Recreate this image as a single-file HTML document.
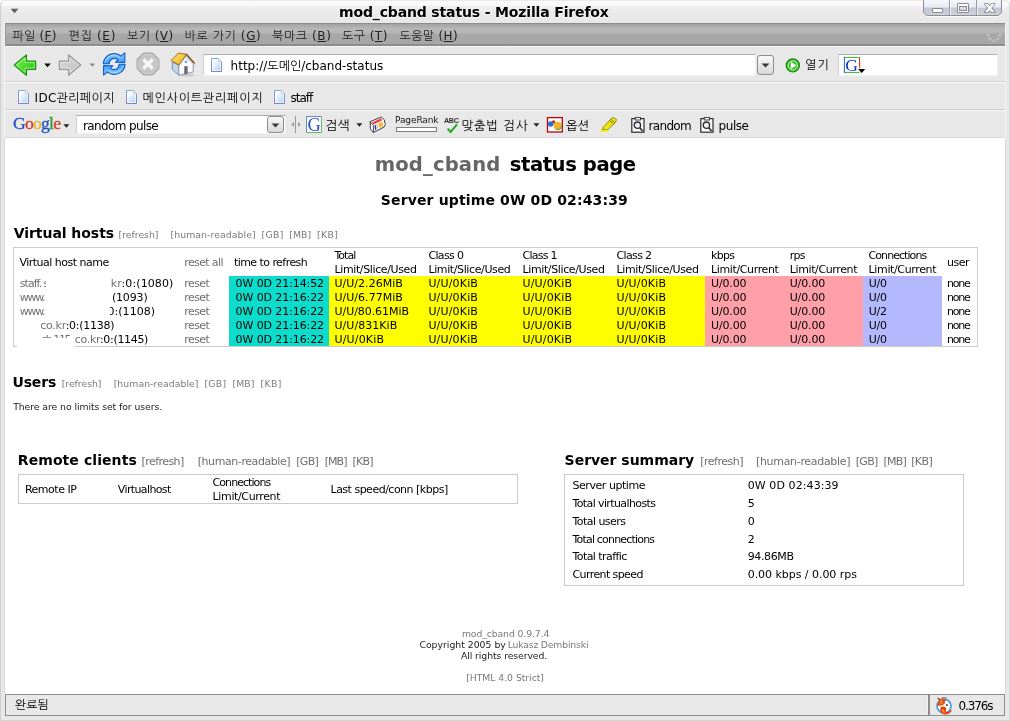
<!DOCTYPE html>
<html lang="ko">
<head>
<meta charset="utf-8">
<title>mod_cband status - Mozilla Firefox</title>
<style>
html,body{margin:0;padding:0;}
body{width:1010px;height:721px;overflow:hidden;background:#fbfbfb;font-family:"DejaVu Sans","Liberation Sans","NanumGothic",sans-serif;}
#win{will-change:transform;position:relative;width:1010px;height:721px;overflow:hidden;background:#e8e8e8;border-radius:6px 6px 0 0;box-shadow:inset 1px 0 0 #cfcfcf,inset -1px 0 0 #d8d8d8,inset 0 -1px 0 #d2d2d2;}
.abs{position:absolute;}
.t{position:absolute;white-space:nowrap;line-height:1;}
.ui{font-size:12px;color:#111;}
/* title bar */
#titlebar{left:1px;top:0;width:1008px;height:23px;border-radius:6px 6px 0 0;background:linear-gradient(#d8d8d8 0,#fbfbfb 1px,#f9f9f9 5px,#f0eef0 7px,#edebed 11px,#e9e9e9 14px,#e8e8e8 23px);}
#title{left:339px;top:4.7px;font-size:14px;font-weight:bold;color:#000;letter-spacing:-0.15px;text-shadow:0 1px 0 rgba(255,255,255,0.85);}
/* menu bar */
#menubar{left:5px;top:23px;width:1000px;height:23px;background:linear-gradient(#8c8c8c 0,#8c8c8c 1px,#a2a2a2 1px,#b4b4b4 5px,#b8b8b8 7px,#b5b5b5 10px,#a7a7a7 11px,#a6a6a6 21px,#8e8e8e 21px,#8a8a8a 23px);box-shadow:inset 1px 0 0 #949494;}
#menubar .t{top:7px;font-size:12px;color:#222;}
#menubar u{text-decoration:underline;}
/* nav toolbar */
#navbar{left:5px;top:46px;width:1000px;height:35px;background:#e8e8e8;border-top:1px solid #f6f6f6;box-sizing:border-box;}
#bmbar{left:5px;top:81px;width:1000px;height:28px;background:#e8e8e8;border-top:1px solid #cdcdcd;box-shadow:inset 0 1px 0 #fbfbfb;box-sizing:border-box;}
#gbar{left:5px;top:109px;width:1000px;height:29px;background:#e8e8e8;border-top:1px solid #cacaca;border-bottom:1px solid #dcdcdc;box-shadow:inset 0 1px 0 #fbfbfb;box-sizing:border-box;}
.field{position:absolute;background:#fff;border:1px solid #cdcdd4;border-top-color:#adadb4;border-right-color:#f0f0f2;border-bottom-color:#f2f2f4;box-sizing:border-box;border-radius:1px;}
/* content */
#content{left:5px;top:138px;width:1000px;height:556px;background:#fff;}

.t{color:#000;}
.box{position:absolute;box-sizing:border-box;border:1px solid #cbcbcb;}
.cell{position:absolute;}
.wh{position:absolute;background:#fff;}
/* status bar */
#statusbar{left:5px;top:694px;width:1000px;height:22px;background:#e8e8e8;border:1px solid #8e8e8e;box-sizing:border-box;}
</style>
</head>
<body>
<div id="win">
  <div id="titlebar" class="abs"></div>
  <div id="title" class="t">mod_cband status - Mozilla Firefox</div>

  <div id="menubar" class="abs">
    <span class="t" style="left:7.5px;letter-spacing:0.25px">파일 (<u>F</u>)</span>
    <span class="t" style="left:63.5px;letter-spacing:0.7px">편집 (<u>E</u>)</span>
    <span class="t" style="left:122px;letter-spacing:0.45px">보기 (<u>V</u>)</span>
    <span class="t" style="left:179.5px;letter-spacing:0.6px">바로 가기 (<u>G</u>)</span>
    <span class="t" style="left:267px;letter-spacing:0.6px">북마크 (<u>B</u>)</span>
    <span class="t" style="left:337px;letter-spacing:0.45px">도구 (<u>T</u>)</span>
    <span class="t" style="left:394.5px;letter-spacing:0.35px">도움말 (<u>H</u>)</span>
  </div>


  <!-- title decorations -->
  <svg class="abs" style="left:10px;top:8px" width="9" height="6" viewBox="0 0 9 6"><polygon points="0.6,0.8 8.4,0.8 4.5,5.2" fill="#5e5e5e"/></svg>
  <div class="abs" id="wbtns" style="left:923px;top:-1px;width:79px;height:17px;box-sizing:border-box;border:1px solid #8f8f8f;border-radius:0 0 5px 5px;background:linear-gradient(#f4f6fb 0,#e6eaf3 7.3px,#c1c5d4 7.8px,#d3d6e1 17px);box-shadow:0 1px 0 #fafafa;"></div>
  <div class="abs" style="left:949px;top:0;width:1px;height:15px;background:#9a9a9a;"></div>
  <div class="abs" style="left:950px;top:0;width:1px;height:15px;background:#f6f6f8;"></div>
  <div class="abs" style="left:976px;top:0;width:1px;height:15px;background:#9a9a9a;"></div>
  <div class="abs" style="left:977px;top:0;width:1px;height:15px;background:#f6f6f8;"></div>
  <div class="abs" style="left:932px;top:8px;width:11px;height:5px;box-sizing:border-box;border:1px solid #8a8a8a;border-radius:1px;background:#fdfdfd;"></div>
  <div class="abs" style="left:957px;top:3px;width:12px;height:10px;box-sizing:border-box;border:1px solid #8a8a8a;border-radius:1px;background:#fdfdfd;"></div>
  <div class="abs" style="left:959px;top:6px;width:8px;height:5px;box-sizing:border-box;border:1px solid #8a8a8a;background:#d4d8e2;"></div>
  <svg class="abs" style="left:983px;top:2px" width="14" height="12" viewBox="983 2 14 12">
    <g fill="#fdfdfd" stroke="#808080" stroke-width="1.5" stroke-linejoin="round">
      <polygon points="984.8,3.9 988,3.9 994.8,12.3 991.6,12.3"/>
      <polygon points="991.6,3.9 994.8,3.9 988,12.3 984.8,12.3"/>
    </g>
    <g fill="#fdfdfd">
      <polygon points="984.8,3.9 988,3.9 994.8,12.3 991.6,12.3"/>
      <polygon points="991.6,3.9 994.8,3.9 988,12.3 984.8,12.3"/>
    </g>
  </svg>
  <!-- throbber -->
  <svg class="abs" style="left:985px;top:26px" width="18" height="18" viewBox="0 0 18 18">
    <g fill="#bdbdbd">
      <rect x="7.7" y="1.2" width="2.6" height="2.6" opacity="0.35"/>
      <rect x="3.2" y="3" width="2.6" height="2.6" opacity="0.4" transform="rotate(45 4.5 4.3)"/>
      <rect x="12.2" y="3" width="2.6" height="2.6" opacity="0.4" transform="rotate(45 13.5 4.3)"/>
      <rect x="1.6" y="7.7" width="2.8" height="2.8" transform="rotate(45 3 9.1)"/>
      <rect x="13.6" y="7.7" width="2.8" height="2.8" transform="rotate(45 15 9.1)"/>
      <rect x="3.6" y="11.6" width="2.8" height="2.8" transform="rotate(45 5 13)"/>
      <rect x="11.6" y="11.6" width="2.8" height="2.8" transform="rotate(45 13 13)"/>
      <rect x="7.6" y="13.6" width="2.8" height="2.8" transform="rotate(45 9 15)"/>
    </g>
  </svg>

  <div class="abs" style="left:4px;top:23px;width:1px;height:115px;background:#f3f3f3;"></div>
  <div class="abs" style="left:1005px;top:23px;width:1px;height:115px;background:#f3f3f3;"></div>
  <div class="abs" style="left:4px;top:138px;width:1px;height:556px;background:#d8d8d8;"></div>
  <div class="abs" style="left:1005px;top:138px;width:1px;height:556px;background:#d8d8d8;"></div>
  <div id="navbar" class="abs"></div>

  <!-- NAV TOOLBAR ICONS -->
  <svg class="abs" style="left:12px;top:52px" width="26" height="26" viewBox="12 52 26 26">
    <defs>
      <linearGradient id="gback" x1="0" y1="0" x2="1" y2="1">
        <stop offset="0" stop-color="#a8f488"/><stop offset="0.5" stop-color="#4cdb2c"/><stop offset="1" stop-color="#22b814"/>
      </linearGradient>
      <linearGradient id="gfwd" x1="0" y1="0" x2="1" y2="1">
        <stop offset="0" stop-color="#dcdcdc"/><stop offset="1" stop-color="#bdbdbd"/>
      </linearGradient>
    </defs>
    <polygon points="14.3,65 26.4,54.9 26.4,61.2 35.6,61.2 35.6,69.4 26.4,69.4 26.4,75.3" fill="url(#gback)" stroke="#13990b" stroke-width="1.3" stroke-linejoin="round"/>
    <polygon points="16.3,65 25.1,57.7 25.1,62.5 34.3,62.5 34.3,68.1 25.1,68.1 25.1,72.5" fill="none" stroke="#b9f59f" stroke-width="0.9" stroke-linejoin="round" opacity="0.85"/>
  </svg>
  <svg class="abs" style="left:44px;top:63px" width="7" height="5" viewBox="0 0 7 5"><polygon points="0.3,0.5 6.7,0.5 3.5,4.2" fill="#000"/></svg>
  <svg class="abs" style="left:57px;top:52px" width="26" height="26" viewBox="57 52 26 26">
    <polygon points="80.7,65 68.6,54.9 68.6,61.2 59.4,61.2 59.4,69.4 68.6,69.4 68.6,75.3" fill="url(#gfwd)" stroke="#989898" stroke-width="1.3" stroke-linejoin="round"/>
    <polygon points="78.7,65 69.9,57.7 69.9,62.5 60.7,62.5 60.7,68.1 69.9,68.1 69.9,72.5" fill="none" stroke="#e9e9e9" stroke-width="0.9" stroke-linejoin="round" opacity="0.9"/>
  </svg>
  <svg class="abs" style="left:89px;top:63px" width="7" height="5" viewBox="0 0 7 5"><polygon points="0.6,0.6 6.2,0.6 3.4,3.8" fill="#8a8a8a"/></svg>

  <!-- reload -->
  <svg class="abs" style="left:102px;top:52px" width="24" height="24" viewBox="0 0 24 24">
    <defs>
      <linearGradient id="grel" x1="0" y1="0" x2="0" y2="1">
        <stop offset="0" stop-color="#94d2ff"/><stop offset="1" stop-color="#3898f4"/>
      </linearGradient>
    </defs>
    <g>
      <path d="M1.4 11.8 C1.6 5.6 6.6 1.4 12.4 1.6 C15 1.7 17.2 2.6 19 4.2 L22.8 0.8 L22.8 10.4 L13.6 10.2 L16.2 7.6 C15 6.8 13.8 6.4 12.4 6.4 C9.8 6.4 7.6 8.2 7.2 11.8 Z" fill="url(#grel)" stroke="#0c5ad0" stroke-width="1.1" stroke-linejoin="round"/>
      <path d="M3 10.6 C3.6 6.2 7.6 3 12.4 3.1 C14.6 3.2 16.6 4 18.2 5.4" fill="none" stroke="#c4e6ff" stroke-width="1" opacity="0.8"/>
    </g>
    <g transform="rotate(180 12.2 12)">
      <path d="M1.4 11.8 C1.6 5.6 6.6 1.4 12.4 1.6 C15 1.7 17.2 2.6 19 4.2 L22.8 0.8 L22.8 10.4 L13.6 10.2 L16.2 7.6 C15 6.8 13.8 6.4 12.4 6.4 C9.8 6.4 7.6 8.2 7.2 11.8 Z" fill="url(#grel)" stroke="#0c5ad0" stroke-width="1.1" stroke-linejoin="round"/>
      <path d="M3 10.6 C3.6 6.2 7.6 3 12.4 3.1 C14.6 3.2 16.6 4 18.2 5.4" fill="none" stroke="#c4e6ff" stroke-width="1" opacity="0.8"/>
    </g>
  </svg>

  <!-- stop -->
  <svg class="abs" style="left:136px;top:52px" width="24" height="24" viewBox="0 0 24 24">
    <polygon points="7.6,1.2 16.4,1.2 22.8,7.6 22.8,16.4 16.4,22.8 7.6,22.8 1.2,16.4 1.2,7.6" fill="#c4c4c4" stroke="#a4a4a4" stroke-width="1.2"/>
    <polygon points="8.2,2.7 15.8,2.7 21.3,8.2 21.3,15.8 15.8,21.3 8.2,21.3 2.7,15.8 2.7,8.2" fill="none" stroke="#d4d4d4" stroke-width="0.9"/>
    <path d="M7.2 7.2 L16.8 16.8 M16.8 7.2 L7.2 16.8" stroke="#f6f6f6" stroke-width="3.4" stroke-linecap="butt"/>
  </svg>

  <!-- home -->
  <svg class="abs" style="left:170px;top:52px" width="26" height="26" viewBox="170 52 26 26">
    <defs>
      <linearGradient id="groof" x1="0" y1="0" x2="1" y2="1"><stop offset="0" stop-color="#fbe070"/><stop offset="1" stop-color="#eab420"/></linearGradient>
      <linearGradient id="gdoor" x1="0" y1="0" x2="1" y2="0"><stop offset="0" stop-color="#4a4e56"/><stop offset="1" stop-color="#8a8e96"/></linearGradient>
    </defs>
    <ellipse cx="187" cy="75.2" rx="7.5" ry="1.6" fill="#000" opacity="0.12"/>
    <polygon points="172.3,62 178.8,65.4 178.8,75.2 172.3,69.5" fill="#c2d5ea" stroke="#6d84b6" stroke-width="0.9" stroke-linejoin="round"/>
    <polygon points="186,55.6 193.2,63.2 193.2,72 178.8,75.2 178.8,65" fill="#fbfbfd" stroke="#8690aa" stroke-width="0.9" stroke-linejoin="round"/>
    <polygon points="186,56.4 192.6,63.4 192.6,65 186,58.6 179.6,66.4 179.6,64.6" fill="#d9dde6" opacity="0.8"/>
    <rect x="184.4" y="66.2" width="3.5" height="8" fill="url(#gdoor)"/>
    <rect x="184.9" y="60.9" width="2" height="2" fill="#3f9fe8"/>
    <polygon points="171.1,60.5 178.4,53.1 186.4,54.3 178.9,65" fill="url(#groof)" stroke="#a06c12" stroke-width="1" stroke-linejoin="round"/>
    <path d="M186.3 54.3 L194.3 62.9" stroke="#8a5a1c" stroke-width="1.5" fill="none" stroke-linecap="round"/>
  </svg>

  <!-- url field -->
  <div class="field" style="left:203px;top:54px;width:553px;height:22px;"></div>
  <svg class="abs" style="left:210px;top:57px" width="13" height="16" viewBox="0 0 13 16">
    <defs><linearGradient id="gpage" x1="0" y1="0" x2="0.8" y2="1"><stop offset="0" stop-color="#ffffff"/><stop offset="0.4" stop-color="#f1f6ff"/><stop offset="1" stop-color="#a4d0f8"/></linearGradient><linearGradient id="gpagest" x1="0" y1="0" x2="0" y2="1"><stop offset="0" stop-color="#7ea4e2"/><stop offset="1" stop-color="#847cc6"/></linearGradient></defs>
    <path d="M1.5 1.5 L8.4 1.5 L11.5 4.6 L11.5 14.5 L1.5 14.5 Z" fill="url(#gpage)" stroke="url(#gpagest)" stroke-width="1"/><path d="M2.5 2.5 L8 2.5 L10.5 5 L10.5 13.5 L2.5 13.5 Z" fill="none" stroke="#fff" stroke-width="0.9" opacity="0.9"/><path d="M8.3 1.6 L8.3 4.7 L11.4 4.7 Z" fill="#fdfdff" stroke="#b9bccf" stroke-width="0.6"/>
  </svg>
  <div class="t ui" style="left:230.6px;top:60px;">http://도메인/cband-status</div>
  <!-- url dropdown -->
  <div class="abs" style="left:757px;top:55px;width:17px;height:20px;box-sizing:border-box;border:1px solid #8e8e8e;border-radius:3px;background:linear-gradient(#f8f8f8,#d8d8d8);"></div>
  <svg class="abs" style="left:761px;top:63px" width="9" height="5" viewBox="0 0 9 5"><polygon points="0.5,0.4 8.5,0.4 4.5,4.6" fill="#3a3a3a"/></svg>
  <!-- go -->
  <svg class="abs" style="left:785px;top:58px" width="16" height="15" viewBox="0 0 16 15">
    <circle cx="7.8" cy="7.4" r="6.6" fill="#3cc22c" stroke="#1c8a14" stroke-width="1.2"/>
    <circle cx="7.8" cy="7.4" r="4.6" fill="none" stroke="#c8f4bc" stroke-width="0.9"/>
    <polygon points="5.8,3.8 11.4,7.4 5.8,11" fill="#fff"/>
  </svg>
  <div class="t ui" style="left:805px;top:59px;letter-spacing:1.3px;">열기</div>
  <!-- search box -->
  <div class="field" style="left:838px;top:54px;width:160px;height:22px;"></div>
  <svg class="abs" style="left:843px;top:56px" width="24" height="19" viewBox="843 56 24 19">
    <rect x="844.4" y="57.4" width="15.2" height="15" fill="#fff"/>
    <path d="M843.9 57.4 L860.1 57.4" stroke="#2fb62f" stroke-width="1"/>
    <path d="M844 72.4 L859.6 72.4" stroke="#2fb62f" stroke-width="1"/>
    <path d="M844.4 56.9 L844.4 72.9" stroke="#1260ee" stroke-width="1"/>
    <path d="M859.6 57.9 L859.6 68.2" stroke="#e6200f" stroke-width="1"/>
    <text x="845.3" y="70.9" font-family="'Liberation Serif','DejaVu Serif',serif" font-size="17.6" fill="#1232c0">G</text>
    <polygon points="858,69.1 865.3,69.1 861.65,73.1" fill="#000"/>
  </svg>

  <div id="bmbar" class="abs"></div>
  <div id="gbar" class="abs"></div>


  <!-- BOOKMARKS -->
<svg class="abs" style="left:17px;top:89px" width="13" height="16" viewBox="0 0 13 16"><path d="M1.5 1.5 L8.4 1.5 L11.5 4.6 L11.5 14.5 L1.5 14.5 Z" fill="url(#gpage)" stroke="url(#gpagest)" stroke-width="1"/><path d="M2.5 2.5 L8 2.5 L10.5 5 L10.5 13.5 L2.5 13.5 Z" fill="none" stroke="#fff" stroke-width="0.9" opacity="0.9"/><path d="M8.3 1.6 L8.3 4.7 L11.4 4.7 Z" fill="#fdfdff" stroke="#b9bccf" stroke-width="0.6"/></svg>
  <div class="t ui" style="left:34.6px;top:92px;letter-spacing:0.3px;">IDC관리페이지</div>
<svg class="abs" style="left:125px;top:89px" width="13" height="16" viewBox="0 0 13 16"><path d="M1.5 1.5 L8.4 1.5 L11.5 4.6 L11.5 14.5 L1.5 14.5 Z" fill="url(#gpage)" stroke="url(#gpagest)" stroke-width="1"/><path d="M2.5 2.5 L8 2.5 L10.5 5 L10.5 13.5 L2.5 13.5 Z" fill="none" stroke="#fff" stroke-width="0.9" opacity="0.9"/><path d="M8.3 1.6 L8.3 4.7 L11.4 4.7 Z" fill="#fdfdff" stroke="#b9bccf" stroke-width="0.6"/></svg>
  <div class="t ui" style="left:142.5px;top:92px;letter-spacing:0.8px;">메인사이트관리페이지</div>
<svg class="abs" style="left:273px;top:89px" width="13" height="16" viewBox="0 0 13 16"><path d="M1.5 1.5 L8.4 1.5 L11.5 4.6 L11.5 14.5 L1.5 14.5 Z" fill="url(#gpage)" stroke="url(#gpagest)" stroke-width="1"/><path d="M2.5 2.5 L8 2.5 L10.5 5 L10.5 13.5 L2.5 13.5 Z" fill="none" stroke="#fff" stroke-width="0.9" opacity="0.9"/><path d="M8.3 1.6 L8.3 4.7 L11.4 4.7 Z" fill="#fdfdff" stroke="#b9bccf" stroke-width="0.6"/></svg>
  <div class="t ui" style="left:290.5px;top:92px;letter-spacing:-1px;">staff</div>

  <!-- GOOGLE TOOLBAR -->
  <div class="t" id="glogo" style="left:13px;top:115px;font-family:'Liberation Serif','DejaVu Serif',serif;font-size:17.6px;letter-spacing:-0.75px;-webkit-text-stroke:0.35px;"><span style="color:#2a52c8">G</span><span style="color:#d8382c">o</span><span style="color:#e8b420">o</span><span style="color:#2a52c8">g</span><span style="color:#2ca03c">l</span><span style="color:#d8382c">e</span></div>
  <svg class="abs" style="left:63px;top:124px" width="7" height="4" viewBox="0 0 7 4"><polygon points="0.4,0.3 6.4,0.3 3.4,3.7" fill="#222"/></svg>
  <div class="field" style="left:76px;top:115px;width:210px;height:19px;"></div>
  <div class="t ui" style="left:83px;top:120px;letter-spacing:-0.62px;">random pulse</div>
  <div class="abs" style="left:267px;top:116px;width:17px;height:17px;box-sizing:border-box;border:1px solid #8e8e8e;border-radius:3px;background:linear-gradient(#f8f8f8,#d8d8d8);"></div>
  <svg class="abs" style="left:271px;top:123px" width="9" height="5" viewBox="0 0 9 5"><polygon points="0.5,0.4 8.5,0.4 4.5,4.6" fill="#3a3a3a"/></svg>
  <!-- splitter -->
  <div class="abs" style="left:295px;top:116px;width:1px;height:17px;background:#9a9a9a;"></div>
  <svg class="abs" style="left:291px;top:121px" width="10" height="7" viewBox="0 0 10 7"><polygon points="0.3,3.5 3,1 3,6" fill="#9a9a9a"/><polygon points="9.7,3.5 7,1 7,6" fill="#9a9a9a"/></svg>
  <!-- G search -->
  <svg class="abs" style="left:305px;top:115px" width="18" height="19" viewBox="0 0 18 19">
    <rect x="1.5" y="1.5" width="15" height="16" fill="#fff"/>
    <path d="M1.5 17.5 L1.5 1.5 L16.5 1.5" stroke="#5a8ad8" stroke-width="1" fill="none"/>
    <path d="M16.5 1.5 L16.5 17.5 L1.5 17.5" stroke="#6ab86a" stroke-width="1" fill="none"/>
    <text x="2.4" y="16" font-family="'Liberation Serif','DejaVu Serif',serif" font-size="18.5" fill="#2a4ec8">G</text>
  </svg>
  <div class="t ui" style="left:325px;top:119px;font-size:13px;letter-spacing:0.3px;">검색</div>
  <svg class="abs" style="left:356px;top:123px" width="7" height="4" viewBox="0 0 7 4"><polygon points="0.4,0.3 6.4,0.3 3.4,3.7" fill="#222"/></svg>
  <!-- news icon -->
  <svg class="abs" style="left:364px;top:112px" width="30" height="24" viewBox="364 112 30 24">
    <polygon points="370.2,121.6 381.4,117 384.2,119.6 385.4,124.4 384,127 373.4,132.6 370.4,128.8" fill="#fdfdfd" stroke="#3c3c3c" stroke-width="1" stroke-linejoin="round"/>
    <path d="M370.2 121.6 L373.6 125.8 L373.4 132.6" fill="none" stroke="#3c3c3c" stroke-width="0.9"/>
    <polygon points="372,122.5 381.2,118.3 382.3,120.2 373.5,124.6" fill="#f03e3e"/>
    <polygon points="374.5,125.5 375.9,124.8 376.3,129.6 375,130.4" fill="#2241d2"/>
    <polygon points="376.6,124.6 377.5,124.2 377.7,128.8 376.9,129.2" fill="#a4a4a4"/>
    <polygon points="378.4,123.6 382.4,121.7 383,126 379.2,128" fill="#f8b81e"/>
  </svg>
  <!-- PageRank -->
  <div class="t" style="left:395px;top:116px;font-size:9px;color:#111;letter-spacing:-0.1px;">PageRank</div>
  <div class="abs" style="left:396px;top:127px;width:41px;height:5px;box-sizing:border-box;border:1px solid #7e7e7e;background:#fff;"></div>
  <!-- ABC check -->
  <div class="t" style="left:444px;top:117.4px;font-size:7.2px;font-weight:bold;color:#2c2c2c;letter-spacing:-0.35px;font-family:'Liberation Sans','DejaVu Sans',sans-serif;">ABC</div>
  <svg class="abs" style="left:446px;top:123px" width="13" height="11" viewBox="0 0 13 11"><path d="M1.6 5.6 L4.6 9 L11 1.4" stroke="#1fae1f" stroke-width="2.1" fill="none" stroke-linejoin="miter"/></svg>
  <div class="t ui" style="left:461.5px;top:119.5px;font-size:12.5px;letter-spacing:0.65px;">맞춤법 검사</div>
  <svg class="abs" style="left:533px;top:123px" width="7" height="4" viewBox="0 0 7 4"><polygon points="0.4,0.3 6.4,0.3 3.4,3.7" fill="#222"/></svg>
  <!-- options icon -->
  <svg class="abs" style="left:546px;top:116px" width="18" height="18" viewBox="546 116 18 18">
    <rect x="547.5" y="117.6" width="14.8" height="14.4" fill="#fefefe" stroke="#b60606" stroke-width="1.3"/>
    <circle cx="553.6" cy="121.9" r="1.7" fill="#dc2418"/>
    <circle cx="550.7" cy="124" r="2.7" fill="#2f6cd6"/>
    <circle cx="557.9" cy="126.3" r="3.7" fill="#3c9a3c"/>
    <circle cx="557.4" cy="125.4" r="3.7" fill="#f3b526"/>
  </svg>
  <div class="t ui" style="left:566px;top:119.5px;font-size:12.5px;letter-spacing:-0.2px;">옵션</div>
  <!-- highlighter -->
  <svg class="abs" style="left:599px;top:115px" width="20" height="19" viewBox="599 115 20 19">
    <polygon points="603.2,127.2 612.6,117.3 616.4,119.3 615.7,122.4 607.6,129.7 602.3,129.6" fill="#f0e414" stroke="#8a820e" stroke-width="0.9" stroke-linejoin="round"/>
    <path d="M609.4 120.6 L613.4 123.9 M610.8 119.2 L614.8 122.5" stroke="#6e6608" stroke-width="0.8"/>
    <rect x="600" y="130.2" width="8.2" height="1.9" fill="#f5ee22"/>
  </svg>
<svg class="abs" style="left:631px;top:117px" width="14" height="16" viewBox="0 0 14 16"><rect x="0.8" y="1.6" width="12.2" height="13.6" fill="#fdfdfd" stroke="#2a2a2a" stroke-width="1.2"/><rect x="4.2" y="0.6" width="5.4" height="2.4" fill="#fdfdfd" stroke="#2a2a2a" stroke-width="0.9"/><circle cx="6.4" cy="8.2" r="3.2" fill="#e8f0f8" stroke="#2a2a2a" stroke-width="1.3"/><path d="M8.8 10.8 L11.6 14" stroke="#2a2a2a" stroke-width="1.6"/></svg>
  <div class="t ui" style="left:648.6px;top:120px;letter-spacing:-0.7px;">random</div>
<svg class="abs" style="left:700px;top:117px" width="14" height="16" viewBox="0 0 14 16"><rect x="0.8" y="1.6" width="12.2" height="13.6" fill="#fdfdfd" stroke="#2a2a2a" stroke-width="1.2"/><rect x="4.2" y="0.6" width="5.4" height="2.4" fill="#fdfdfd" stroke="#2a2a2a" stroke-width="0.9"/><circle cx="6.4" cy="8.2" r="3.2" fill="#e8f0f8" stroke="#2a2a2a" stroke-width="1.3"/><path d="M8.8 10.8 L11.6 14" stroke="#2a2a2a" stroke-width="1.6"/></svg>
  <div class="t ui" style="left:718.6px;top:120px;letter-spacing:-0.45px;">pulse</div>

  <div id="content" class="abs"></div>
<!--CONTENT-->

<div class="box" style="left:13px;top:247px;width:965px;height:100px;"></div>
<div class="cell" style="left:229px;top:276px;width:100px;height:70px;background:#0cdccc;"></div>
<div class="cell" style="left:329px;top:276px;width:376px;height:70px;background:#ffff00;"></div>
<div class="cell" style="left:705px;top:276px;width:158px;height:70px;background:#ffa0a8;"></div>
<div class="cell" style="left:863px;top:276px;width:79px;height:70px;background:#b4b8fc;"></div>
<div class="box" style="left:18px;top:474px;width:500px;height:30px;"></div>
<div class="box" style="left:564px;top:474px;width:400px;height:112px;"></div>
<div class="t" style="left:374.7px;top:155.1px;font-size:19.6px;font-weight:bold;color:#666;letter-spacing:0.13px;">mod_cband</div>
<div class="t" style="left:509.7px;top:155.1px;font-size:19.6px;font-weight:bold;letter-spacing:-0.42px;">status page</div>
<div class="t" style="left:380.8px;top:192.8px;font-size:14px;font-weight:bold;letter-spacing:0.14px;">Server uptime 0W 0D 02:43:39</div>
<div class="t" style="left:13.7px;top:226.2px;font-size:14px;font-weight:bold;letter-spacing:-0.05px;">Virtual hosts</div>
<div class="t" style="left:118.6px;top:230.1px;font-size:9.3px;color:#7a7a7a;letter-spacing:-0.01px;">[refresh]</div>
<div class="t" style="left:170.5px;top:230.1px;font-size:9.3px;color:#7a7a7a;letter-spacing:0.09px;">[human-readable]</div>
<div class="t" style="left:261.6px;top:230.1px;font-size:9.3px;color:#7a7a7a;letter-spacing:0.32px;">[GB]</div>
<div class="t" style="left:289.3px;top:230.1px;font-size:9.3px;color:#7a7a7a;letter-spacing:0.08px;">[MB]</div>
<div class="t" style="left:317.0px;top:230.1px;font-size:9.3px;color:#7a7a7a;letter-spacing:0.36px;">[KB]</div>
<div class="t" style="left:19.4px;top:256.7px;font-size:11px;letter-spacing:-0.50px;">Virtual host name</div>
<div class="t" style="left:184.3px;top:256.7px;font-size:11px;color:#6e6e6e;letter-spacing:-0.63px;">reset all</div>
<div class="t" style="left:233.9px;top:256.7px;font-size:11px;letter-spacing:-0.55px;">time to refresh</div>
<div class="t" style="left:334.5px;top:250.2px;font-size:11px;letter-spacing:-1.00px;">Total</div>
<div class="t" style="left:334.5px;top:263.7px;font-size:11px;letter-spacing:-0.38px;">Limit/Slice/Used</div>
<div class="t" style="left:428.4px;top:250.2px;font-size:11px;letter-spacing:-0.64px;">Class 0</div>
<div class="t" style="left:428.4px;top:263.7px;font-size:11px;letter-spacing:-0.38px;">Limit/Slice/Used</div>
<div class="t" style="left:522.5px;top:250.2px;font-size:11px;letter-spacing:-0.74px;">Class 1</div>
<div class="t" style="left:522.5px;top:263.7px;font-size:11px;letter-spacing:-0.38px;">Limit/Slice/Used</div>
<div class="t" style="left:616.5px;top:250.2px;font-size:11px;letter-spacing:-0.64px;">Class 2</div>
<div class="t" style="left:616.5px;top:263.7px;font-size:11px;letter-spacing:-0.38px;">Limit/Slice/Used</div>
<div class="t" style="left:711.0px;top:250.2px;font-size:11px;letter-spacing:-0.69px;">kbps</div>
<div class="t" style="left:711.0px;top:263.7px;font-size:11px;letter-spacing:-0.37px;">Limit/Current</div>
<div class="t" style="left:789.7px;top:250.2px;font-size:11px;letter-spacing:-0.77px;">rps</div>
<div class="t" style="left:789.7px;top:263.7px;font-size:11px;letter-spacing:-0.37px;">Limit/Current</div>
<div class="t" style="left:868.6px;top:250.2px;font-size:11px;letter-spacing:-0.94px;">Connections</div>
<div class="t" style="left:868.6px;top:263.7px;font-size:11px;letter-spacing:-0.37px;">Limit/Current</div>
<div class="t" style="left:947.0px;top:256.7px;font-size:11px;letter-spacing:-0.47px;">user</div>
<div class="t" style="left:184.3px;top:277.8px;font-size:11px;color:#6e6e6e;letter-spacing:-0.59px;">reset</div>
<div class="t" style="left:235.6px;top:277.8px;font-size:11px;letter-spacing:-0.10px;">0W 0D 21:14:52</div>
<div class="t" style="left:334.5px;top:277.8px;font-size:11px;letter-spacing:0.02px;">U/U/2.26MiB</div>
<div class="t" style="left:428.4px;top:277.8px;font-size:11px;letter-spacing:0.17px;">U/U/0KiB</div>
<div class="t" style="left:522.5px;top:277.8px;font-size:11px;letter-spacing:0.17px;">U/U/0KiB</div>
<div class="t" style="left:616.5px;top:277.8px;font-size:11px;letter-spacing:0.17px;">U/U/0KiB</div>
<div class="t" style="left:711.0px;top:277.8px;font-size:11px;letter-spacing:-0.13px;">U/0.00</div>
<div class="t" style="left:789.7px;top:277.8px;font-size:11px;letter-spacing:-0.13px;">U/0.00</div>
<div class="t" style="left:868.7px;top:277.8px;font-size:11px;letter-spacing:-0.18px;">U/0</div>
<div class="t" style="left:947.0px;top:277.8px;font-size:11px;letter-spacing:-1.22px;">none</div>
<div class="t" style="left:184.3px;top:291.9px;font-size:11px;color:#6e6e6e;letter-spacing:-0.59px;">reset</div>
<div class="t" style="left:235.6px;top:291.9px;font-size:11px;letter-spacing:-0.10px;">0W 0D 21:16:22</div>
<div class="t" style="left:334.5px;top:291.9px;font-size:11px;letter-spacing:0.02px;">U/U/6.77MiB</div>
<div class="t" style="left:428.4px;top:291.9px;font-size:11px;letter-spacing:0.17px;">U/U/0KiB</div>
<div class="t" style="left:522.5px;top:291.9px;font-size:11px;letter-spacing:0.17px;">U/U/0KiB</div>
<div class="t" style="left:616.5px;top:291.9px;font-size:11px;letter-spacing:0.17px;">U/U/0KiB</div>
<div class="t" style="left:711.0px;top:291.9px;font-size:11px;letter-spacing:-0.13px;">U/0.00</div>
<div class="t" style="left:789.7px;top:291.9px;font-size:11px;letter-spacing:-0.13px;">U/0.00</div>
<div class="t" style="left:868.7px;top:291.9px;font-size:11px;letter-spacing:-0.18px;">U/0</div>
<div class="t" style="left:947.0px;top:291.9px;font-size:11px;letter-spacing:-1.22px;">none</div>
<div class="t" style="left:184.3px;top:305.9px;font-size:11px;color:#6e6e6e;letter-spacing:-0.59px;">reset</div>
<div class="t" style="left:235.6px;top:305.9px;font-size:11px;letter-spacing:-0.10px;">0W 0D 21:16:22</div>
<div class="t" style="left:334.5px;top:305.9px;font-size:11px;letter-spacing:-0.06px;">U/U/80.61MiB</div>
<div class="t" style="left:428.4px;top:305.9px;font-size:11px;letter-spacing:0.17px;">U/U/0KiB</div>
<div class="t" style="left:522.5px;top:305.9px;font-size:11px;letter-spacing:0.17px;">U/U/0KiB</div>
<div class="t" style="left:616.5px;top:305.9px;font-size:11px;letter-spacing:0.17px;">U/U/0KiB</div>
<div class="t" style="left:711.0px;top:305.9px;font-size:11px;letter-spacing:-0.13px;">U/0.00</div>
<div class="t" style="left:789.7px;top:305.9px;font-size:11px;letter-spacing:-0.13px;">U/0.00</div>
<div class="t" style="left:868.7px;top:305.9px;font-size:11px;letter-spacing:-0.18px;">U/2</div>
<div class="t" style="left:947.0px;top:305.9px;font-size:11px;letter-spacing:-1.22px;">none</div>
<div class="t" style="left:184.3px;top:319.9px;font-size:11px;color:#6e6e6e;letter-spacing:-0.59px;">reset</div>
<div class="t" style="left:235.6px;top:319.9px;font-size:11px;letter-spacing:-0.10px;">0W 0D 21:16:22</div>
<div class="t" style="left:334.5px;top:319.9px;font-size:11px;letter-spacing:0.04px;">U/U/831KiB</div>
<div class="t" style="left:428.4px;top:319.9px;font-size:11px;letter-spacing:0.17px;">U/U/0KiB</div>
<div class="t" style="left:522.5px;top:319.9px;font-size:11px;letter-spacing:0.17px;">U/U/0KiB</div>
<div class="t" style="left:616.5px;top:319.9px;font-size:11px;letter-spacing:0.17px;">U/U/0KiB</div>
<div class="t" style="left:711.0px;top:319.9px;font-size:11px;letter-spacing:-0.13px;">U/0.00</div>
<div class="t" style="left:789.7px;top:319.9px;font-size:11px;letter-spacing:-0.13px;">U/0.00</div>
<div class="t" style="left:868.7px;top:319.9px;font-size:11px;letter-spacing:-0.18px;">U/0</div>
<div class="t" style="left:947.0px;top:319.9px;font-size:11px;letter-spacing:-1.22px;">none</div>
<div class="t" style="left:184.3px;top:334.0px;font-size:11px;color:#6e6e6e;letter-spacing:-0.59px;">reset</div>
<div class="t" style="left:235.6px;top:334.0px;font-size:11px;letter-spacing:-0.10px;">0W 0D 21:16:22</div>
<div class="t" style="left:334.5px;top:334.0px;font-size:11px;letter-spacing:0.17px;">U/U/0KiB</div>
<div class="t" style="left:428.4px;top:334.0px;font-size:11px;letter-spacing:0.17px;">U/U/0KiB</div>
<div class="t" style="left:522.5px;top:334.0px;font-size:11px;letter-spacing:0.17px;">U/U/0KiB</div>
<div class="t" style="left:616.5px;top:334.0px;font-size:11px;letter-spacing:0.17px;">U/U/0KiB</div>
<div class="t" style="left:711.0px;top:334.0px;font-size:11px;letter-spacing:-0.13px;">U/0.00</div>
<div class="t" style="left:789.7px;top:334.0px;font-size:11px;letter-spacing:-0.13px;">U/0.00</div>
<div class="t" style="left:868.7px;top:334.0px;font-size:11px;letter-spacing:-0.18px;">U/0</div>
<div class="t" style="left:947.0px;top:334.0px;font-size:11px;letter-spacing:-1.22px;">none</div>
<div class="t" style="left:19.8px;top:277.8px;font-size:11px;color:#707070;letter-spacing:-0.98px;">staff.</div>
<div class="t" style="left:43.6px;top:277.8px;font-size:11px;color:#707070;letter-spacing:-0.28px;">s</div>
<div class="t" style="left:110.7px;top:277.8px;font-size:11px;letter-spacing:0.09px;"><span style="color:#707070">kr</span>:0:(1080)</div>
<div class="t" style="left:19.8px;top:291.9px;font-size:11px;color:#707070;letter-spacing:-1.29px;">www.</div>
<div class="t" style="left:111.9px;top:291.9px;font-size:11px;letter-spacing:-0.16px;">(1093)</div>
<div class="t" style="left:19.8px;top:305.9px;font-size:11px;color:#707070;letter-spacing:-1.29px;">www.</div>
<div class="t" style="left:107.4px;top:305.9px;font-size:11px;letter-spacing:0.06px;">0:(1108)</div>
<div class="t" style="left:40.3px;top:319.9px;font-size:11px;letter-spacing:-0.28px;"><span style="color:#707070">co.kr</span>:0:(1138)</div>
<div class="t" style="left:41.1px;top:334.0px;font-size:11px;color:#707070;letter-spacing:-1.42px;">ch 115</div>
<div class="t" style="left:74.8px;top:334.0px;font-size:11px;letter-spacing:-0.32px;"><span style="color:#707070">co.kr</span>:0:(1145)</div>
<div class="t" style="left:12.4px;top:375.2px;font-size:14px;font-weight:bold;letter-spacing:-0.13px;">Users</div>
<div class="t" style="left:61.7px;top:379.1px;font-size:9.3px;color:#7a7a7a;letter-spacing:-0.02px;">[refresh]</div>
<div class="t" style="left:113.7px;top:379.1px;font-size:9.3px;color:#7a7a7a;letter-spacing:0.06px;">[human-readable]</div>
<div class="t" style="left:204.4px;top:379.1px;font-size:9.3px;color:#7a7a7a;letter-spacing:0.32px;">[GB]</div>
<div class="t" style="left:232.5px;top:379.1px;font-size:9.3px;color:#7a7a7a;letter-spacing:0.08px;">[MB]</div>
<div class="t" style="left:260.6px;top:379.1px;font-size:9.3px;color:#7a7a7a;letter-spacing:0.36px;">[KB]</div>
<div class="t" style="left:13.2px;top:401.7px;font-size:9.3px;color:#222;letter-spacing:-0.07px;">There are no limits set for users.</div>
<div class="t" style="left:17.8px;top:453.4px;font-size:14px;font-weight:bold;letter-spacing:0.08px;">Remote clients</div>
<div class="t" style="left:141.6px;top:455.9px;font-size:11px;color:#6e6e6e;letter-spacing:-0.57px;">[refresh]</div>
<div class="t" style="left:197.7px;top:455.9px;font-size:11px;color:#6e6e6e;letter-spacing:-0.42px;">[human-readable]</div>
<div class="t" style="left:296.3px;top:455.7px;font-size:11px;color:#6e6e6e;letter-spacing:-0.72px;">[GB]</div>
<div class="t" style="left:324.7px;top:455.7px;font-size:11px;color:#6e6e6e;letter-spacing:-0.94px;">[MB]</div>
<div class="t" style="left:352.5px;top:455.7px;font-size:11px;color:#6e6e6e;letter-spacing:-0.78px;">[KB]</div>
<div class="t" style="left:24.9px;top:484.1px;font-size:11px;letter-spacing:-0.48px;">Remote IP</div>
<div class="t" style="left:117.8px;top:484.0px;font-size:11px;letter-spacing:-0.62px;">Virtualhost</div>
<div class="t" style="left:212.6px;top:476.8px;font-size:11px;letter-spacing:-0.94px;">Connections</div>
<div class="t" style="left:212.6px;top:490.8px;font-size:11px;letter-spacing:-0.37px;">Limit/Current</div>
<div class="t" style="left:330.5px;top:484.0px;font-size:11px;letter-spacing:-0.50px;">Last speed/conn [kbps]</div>
<div class="t" style="left:564.6px;top:453.4px;font-size:14px;font-weight:bold;letter-spacing:-0.02px;">Server summary</div>
<div class="t" style="left:700.2px;top:455.9px;font-size:11px;color:#6e6e6e;letter-spacing:-0.50px;">[refresh]</div>
<div class="t" style="left:756.0px;top:455.9px;font-size:11px;color:#6e6e6e;letter-spacing:-0.32px;">[human-readable]</div>
<div class="t" style="left:855.8px;top:455.7px;font-size:11px;color:#6e6e6e;letter-spacing:-0.72px;">[GB]</div>
<div class="t" style="left:883.5px;top:455.7px;font-size:11px;color:#6e6e6e;letter-spacing:-0.81px;">[MB]</div>
<div class="t" style="left:911.2px;top:455.7px;font-size:11px;color:#6e6e6e;letter-spacing:-0.61px;">[KB]</div>
<div class="t" style="left:572.5px;top:479.8px;font-size:11px;letter-spacing:-0.45px;">Server uptime</div>
<div class="t" style="left:747.7px;top:479.8px;font-size:11px;letter-spacing:0.09px;">0W 0D 02:43:39</div>
<div class="t" style="left:572.5px;top:497.7px;font-size:11px;letter-spacing:-0.61px;">Total virtualhosts</div>
<div class="t" style="left:747.7px;top:497.7px;font-size:11px;letter-spacing:-0.28px;">5</div>
<div class="t" style="left:572.5px;top:515.6px;font-size:11px;letter-spacing:-0.55px;">Total users</div>
<div class="t" style="left:747.7px;top:515.6px;font-size:11px;letter-spacing:-0.28px;">0</div>
<div class="t" style="left:572.5px;top:533.5px;font-size:11px;letter-spacing:-0.81px;">Total connections</div>
<div class="t" style="left:747.7px;top:533.5px;font-size:11px;letter-spacing:-0.28px;">2</div>
<div class="t" style="left:572.5px;top:551.4px;font-size:11px;letter-spacing:-0.57px;">Total traffic</div>
<div class="t" style="left:747.7px;top:551.4px;font-size:11px;letter-spacing:-0.37px;">94.86MB</div>
<div class="t" style="left:572.5px;top:569.3px;font-size:11px;letter-spacing:-0.59px;">Current speed</div>
<div class="t" style="left:747.7px;top:569.3px;font-size:11px;letter-spacing:-0.04px;">0.00 kbps / 0.00 rps</div>
<div class="t" style="left:461.9px;top:629.1px;font-size:9.3px;color:#7a7a7a;letter-spacing:-0.11px;">mod_cband 0.9.7.4</div>
<div class="t" style="left:419.4px;top:639.6px;font-size:9.3px;color:#222;">Copyright 2005 by</div>
<div class="t" style="left:507.7px;top:639.6px;font-size:9.3px;color:#7a7a7a;letter-spacing:-0.19px;">Lukasz Dembinski</div>
<div class="t" style="left:461.0px;top:651.1px;font-size:9.3px;color:#222;letter-spacing:-0.09px;">All rights reserved.</div>
<div class="t" style="left:466.2px;top:672.8px;font-size:9.3px;color:#7a7a7a;letter-spacing:-0.05px;">[HTML 4.0 Strict]</div>
<div class="wh" style="left:46.3px;top:277px;width:63.9px;height:13px;"></div>
<div class="wh" style="left:45.8px;top:291px;width:64.4px;height:27px;"></div>
<div class="wh" style="left:17px;top:318px;width:24.1px;height:31px;"></div>
<div class="wh" style="left:17px;top:337.7px;width:57.8px;height:11.3px;"></div>

<!--/CONTENT-->

  <div id="statusbar" class="abs"></div>
  <!-- STATUS BAR CONTENT -->
  <div class="t ui" style="left:15px;top:699px;">완료됨</div>
  <div class="abs" style="left:927px;top:695px;width:1px;height:20px;background:#f2f2f2;"></div>
  <div class="abs" style="left:928px;top:695px;width:1.5px;height:20px;background:#8e8e8e;"></div>
  <svg class="abs" style="left:935px;top:696px" width="18" height="19" viewBox="935 696 18 19">
    <rect x="942.2" y="697" width="4.4" height="1.3" fill="#8c8c8c"/>
    <circle cx="944" cy="706.1" r="7" fill="#fdfdfd" stroke="#3b9be6" stroke-width="1.6"/>
    <path d="M937.2 697.4 L939.4 698.8 L941.2 698.4 C943.4 698.4 945.8 699.2 946.4 700.4 L944.6 701.4 C945.6 702.6 944.8 703.8 943.6 704.6 L941 705.8 L936.8 705.4 C936.4 704.6 938 703.2 939 701.8 C939.2 700 938.2 698.6 937.2 697.4 Z" fill="#e54d16"/>
    <path d="M939.6 699.6 C940.8 700.6 941 702.4 940 704.4 L942.8 703.2 C943.2 701.6 942 700 939.6 699.6 Z" fill="#f78f1e"/>
    <path d="M937.2 697.4 L939.4 698.8 L938.6 700 Z" fill="#7a1e0c"/>
    <path d="M941.6 706.4 C943.6 706 945.8 707 946.2 708.6 C946.4 710 945.6 711 945.8 712 C947.6 712.4 949.8 711 951.8 709.4 C951.6 712.2 948.6 714.4 945 714.4 C942 714.4 940 712 940.2 709.4 C940.4 708 940.8 707 941.6 706.4 Z" fill="#e83c12"/>
    <path d="M942.2 709 C943.4 708.6 944.6 709.6 944.4 711 C944.2 712.2 945 713 946.4 713.2 C944.4 713.8 942.2 712.8 941.8 711 C941.6 710.2 941.8 709.4 942.2 709 Z" fill="#f28a1c"/>
    <ellipse cx="943.4" cy="705.7" rx="2.3" ry="0.8" fill="#f5efb8"/>
    <circle cx="946.9" cy="705.1" r="0.95" fill="#0c0c0c"/>
  </svg>
  <div class="t ui" style="left:958.5px;top:700px;letter-spacing:-1.1px;">0.376s</div>

</div>
</body>
</html>
